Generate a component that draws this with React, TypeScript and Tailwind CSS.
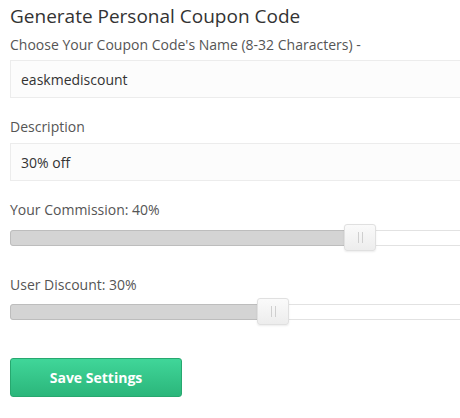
import React from "react";

function Slider({ left }: { left: number }) {
  return (
    <div className="relative h-[27px] w-[1000px]">
      <div className="absolute left-0 top-[6px] h-[16px] w-full rounded-[3px] border border-[#e2e2e2] bg-white" />
      <div
        className="absolute left-0 top-[6px] h-[16px] rounded-l-[3px] border border-[#bdbdbd] bg-[#d4d4d4]"
        style={{ width: left + 4 }}
      />
      <div
        className="absolute top-0 flex h-[27px] w-[32px] items-center justify-center gap-[3px] rounded-[3px] border border-[#e0e0e0] bg-gradient-to-b from-[#fafafa] to-[#ededed] shadow-[0_1px_2px_rgba(0,0,0,0.08)]"
        style={{ left }}
      >
        <div className="h-[11px] w-px bg-[#cfcfcf]" />
        <div className="h-[11px] w-px bg-[#cfcfcf]" />
      </div>
    </div>
  );
}

export default function App() {
  return (
    <div
      className="h-[418px] w-[460px] overflow-hidden bg-white pl-[10px] text-[#555]"
      style={{ fontFamily: '"Open Sans", sans-serif' }}
    >
      <h1 className="pt-[1px] text-[19px] leading-[30px] font-medium text-[#333]">
        Generate Personal Coupon Code
      </h1>
      <div className="mt-[4px] text-[14px] leading-[20px]">
        Choose Your Coupon Code's Name (8-32 Characters) -
      </div>
      <div className="mt-[5px] flex h-[38px] w-[500px] items-center border border-[#ececec] bg-[#fcfcfc] pl-[10px] text-[14px] text-[#333]">
        easkmediscount
      </div>
      <div className="mt-[19px] text-[14px] leading-[20px]">Description</div>
      <div className="mt-[6px] flex h-[38px] w-[500px] items-center border border-[#ececec] bg-[#fcfcfc] pl-[10px] text-[14px] text-[#333]">
        30% off
      </div>
      <div className="mt-[19px] text-[14px] leading-[20px]">Your Commission: 40%</div>
      <div className="mt-[4px]">
        <Slider left={334} />
      </div>
      <div className="mt-[24px] text-[14px] leading-[20px]">User Discount: 30%</div>
      <div className="mt-[3px]">
        <Slider left={247} />
      </div>
      <button className="mt-[33px] h-[39px] w-[172px] rounded-[3px] border border-[#27a86f] bg-gradient-to-b from-[#40d699] to-[#2bb67b] text-[14px] font-bold text-white">
        Save Settings
      </button>
    </div>
  );
}
